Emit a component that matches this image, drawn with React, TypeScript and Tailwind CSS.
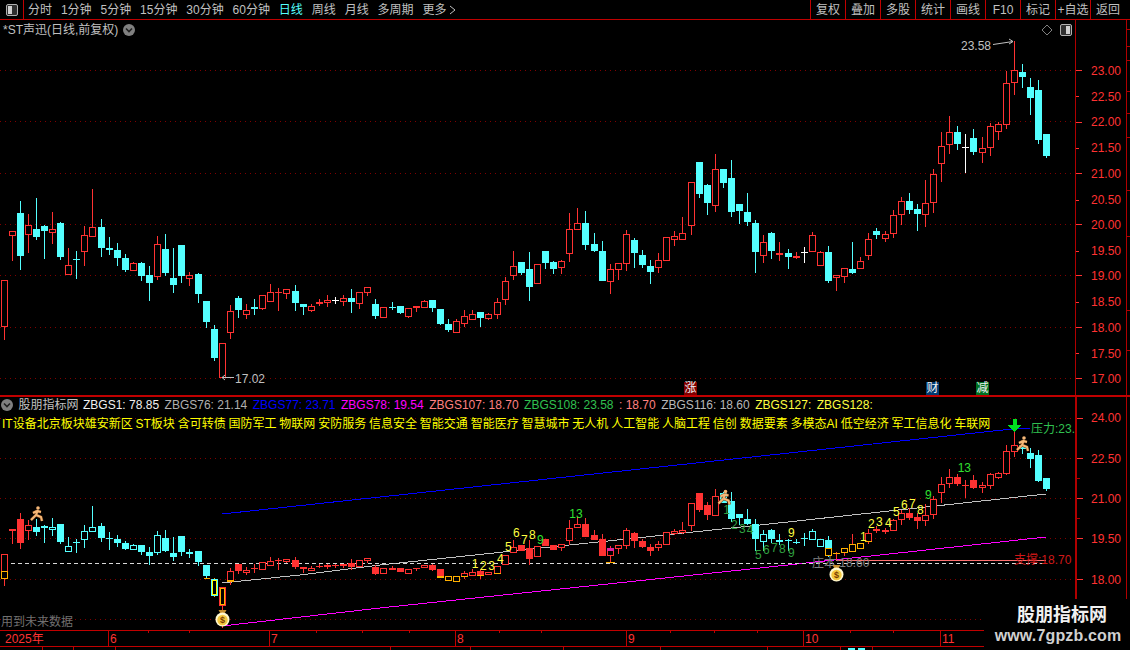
import React from "react";

type C = [number, number, number, number, number, string];
const R = "#ff3232", CY = "#54ffff", OR = "#ffb000", AX = "#b00000", DOT = "#800000";

const up1: [number, number, C[]][] = [
  [0, 180, [
    [13,301,480,301,440,"u"],[37,154,243,154,167,"u"],[61,63,270,99,228,"d"],[85,102,219,135,164,"u"],[109,54,180,147,171,"d"],[133,135,237,138,153,"d"],[157,96,192,148,158,"u"],[181,126,240,129,231,"d"],[205,204,286,256,285,"u"],[229,213,297,238,240,"d"],[253,138,258,165,215,"u"],[277,27,171,141,170,"u"],[305,117,231,141,204,"d"],[328,171,225,204,210,"d"],[352,189,258,210,234,"d"],[376,222,276,234,270,"d"],[400,246,273,250,272,"u"],[424,246,303,249,288,"d"],[448,258,363,285,309,"d"],[472,168,300,193,290,"u"],[496,162,288,207,279,"d"],[520,204,339,294,315,"d"],[544,195,309,195,288,"d"],[568,276,318,286,296,"u"],[595,279,369,282,342,"d"],[619,363,444,363,426,"d"],[643,435,543,447,534,"d"],[667,490,594,490,594,"u"],[691,375,477,394,458,"u"],[715,348,414,354,390,"d"],[739,372,417,391,404,"u"],[763,357,405,381,387,"d"],[787,345,390,346,386,"u"],[811,312,366,337,365,"u"],[835,324,393,336,340,"r"],[859,328,357,328,341,"u"],[886,315,393,333,369,"d"],[910,372,405,372,381,"d"],[934,372,396,379,392,"u"],[958,357,378,366,372,"r"],[982,345,381,361,369,"u"],[1006,351,372,361,363,"w"],[1030,345,378,355,365,"u"],[1054,327,399,354,366,"d"],[1078,336,387,337,371,"u"],[1102,322,348,322,338,"u"],[1126,357,417,372,408,"d"],
  ]],
  [380, 150, [
    [10,472,503,472,503,"u"],[37,457,480,471,474,"d"],[61,468,492,468,489,"d"],[85,474,504,475,500,"u"],[109,468,486,468,473,"r"],[133,450,474,454,473,"u"],[157,450,486,450,474,"d"],[181,477,525,477,522,"d"],[205,507,546,522,540,"d"],[229,507,549,514,548,"u"],[253,480,531,499,521,"u"],[277,480,510,493,509,"u"],[301,486,531,486,504,"d"],[325,489,510,493,506,"u"],[352,444,507,457,494,"u"],[376,381,465,394,449,"u"],[400,303,390,349,377,"u"],[424,336,375,336,369,"d"],[448,306,453,357,411,"d"],[472,342,402,343,401,"u"],[496,303,357,303,339,"d"],[520,333,372,336,357,"d"],[544,330,372,334,353,"u"],[568,189,336,238,311,"u"],[592,174,240,220,239,"u"],[616,183,300,219,285,"d"],[643,249,306,282,303,"d"],[667,273,393,303,393,"d"],[691,342,432,358,395,"u"],[715,340,390,340,359,"u"],[739,240,363,253,341,"u"],[763,264,354,270,309,"d"],[787,300,354,315,345,"d"],[811,330,402,348,366,"d"],[835,309,369,331,353,"u"],[859,262,332,262,332,"u"],[883,243,288,259,269,"u"],[907,201,270,250,269,"u"],[934,97,255,97,227,"u"],[958,36,144,36,132,"d"],[982,102,195,105,159,"d"],[1006,12,186,58,167,"u"],[1030,57,114,57,99,"d"],[1054,30,201,84,186,"d"],[1078,162,222,162,183,"d"],[1102,129,228,186,216,"d"],[1126,210,369,219,306,"d"],
  ]],
  [750, 30, [
    [40,615,699,636,677,"u"],[64,606,687,609,663,"d"],[88,636,693,669,675,"r"],[115,657,717,669,681,"d"],[139,666,687,678,684,"r"],[163,651,699,665,667,"w"],[187,606,666,616,665,"u"],[211,664,708,667,707,"u"],[235,648,759,666,753,"d"],[259,736,783,736,743,"u"],[283,714,759,715,740,"u"],[307,636,732,717,729,"d"],[331,681,717,694,716,"u"],[355,609,690,628,677,"u"],[379,594,627,603,615,"d"],[406,603,636,613,626,"u"],[430,540,624,556,611,"u"],[454,501,585,514,554,"u"],[478,489,552,513,540,"d"],[502,522,603,537,552,"d"],[526,450,591,520,554,"u"],[550,417,549,433,520,"u"],[574,306,456,349,401,"u"],[598,258,372,307,344,"u"],[622,288,360,307,342,"d"],[646,312,429,352,354,"w"],[670,297,375,324,366,"d"],[697,321,399,355,368,"u"],[721,279,378,289,355,"u"],[745,276,330,283,307,"u"],[769,123,297,160,284,"u"],[793,33,195,121,160,"u"],[817,102,174,126,141,"d"],[841,144,255,171,204,"d"],[865,150,342,180,330,"d"],[889,312,384,312,378,"d"],
  ]],
];

const low1: [number, number, C[]][] = [
  [0, 490, [
    [13,193,288,193,267,"u"],[37,118,162,118,124,"u"],[61,70,177,87,159,"r"],[85,90,150,106,122,"u"],[109,87,138,111,126,"d"],[133,105,159,108,114,"d"],[157,84,138,111,119,"h"],[181,102,162,102,156,"d"],[205,141,186,169,185,"h"],[229,147,189,156,159,"d"],[253,105,174,124,150,"h"],[277,48,126,112,125,"h"],[305,99,156,108,144,"d"],[328,126,180,144,147,"d"],[352,135,171,147,159,"d"],[376,153,180,159,177,"d"],[400,162,180,166,179,"h"],[424,165,195,165,186,"d"],[448,171,225,186,198,"d"],[472,123,195,136,188,"h"],[496,120,186,144,183,"d"],[520,141,213,189,201,"d"],[544,138,198,138,186,"d"],[568,177,204,186,192,"d"],[595,183,228,183,216,"d"],[619,225,267,225,259,"d"],[643,265,320,267,317,"cy"],[667,291,414,291,348,"ry"],[691,235,285,244,275,"u"],[715,222,252,222,243,"r"],[739,231,255,240,248,"u"],[763,222,249,235,237,"r"],[787,216,240,217,239,"u"],[811,201,228,214,227,"u"],[835,204,240,210,214,"r"],[859,207,220,208,216,"u"],[886,201,237,210,231,"r"],[910,231,249,231,236,"r"],[934,228,243,235,242,"u"],[958,222,235,228,230,"r"],[982,222,237,225,232,"r"],[1006,222,234,226,228,"r"],[1030,221,234,221,227,"u"],[1054,207,240,220,232,"r"],[1078,210,232,211,230,"u"],[1102,204,220,205,214,"u"],[1126,225,255,232,251,"r"],
  ]],
  [380, 480, [
    [10,264,282,265,281,"u"],[37,258,270,264,269,"r"],[61,264,276,264,276,"r"],[85,268,282,268,281,"u"],[109,264,273,264,266,"r"],[133,256,265,256,265,"u"],[157,252,272,255,270,"r"],[181,267,294,267,294,"r"],[205,288,303,288,303,"o"],[229,288,306,288,306,"o"],[253,273,297,280,292,"u"],[277,268,288,276,287,"u"],[301,268,297,274,286,"r"],[325,276,286,276,286,"u"],[352,258,283,258,282,"u"],[376,226,255,226,255,"u"],[400,180,220,202,218,"u"],[424,195,214,195,214,"r"],[448,180,255,205,237,"r"],[472,199,230,199,230,"u"],[496,177,198,177,198,"r"],[520,195,210,195,210,"r"],[544,192,213,193,204,"u"],[568,120,195,144,183,"u"],[592,111,144,133,143,"u"],[616,114,171,132,171,"r"],[643,150,180,165,180,"r"],[667,162,228,177,228,"r"],[691,198,250,205,227,"u"],[715,195,222,195,206,"u"],[739,144,207,150,198,"u"],[763,156,204,159,183,"r"],[787,177,204,183,201,"r"],[811,192,228,201,213,"r"],[835,183,213,192,204,"u"],[859,156,195,157,194,"u"],[883,147,165,153,162,"u"],[907,126,162,150,160,"u"],[934,69,153,69,137,"u"],[958,40,96,40,90,"r"],[982,66,120,75,105,"r"],[1006,27,108,48,107,"u"],[1030,36,70,40,70,"d"],[1054,36,126,63,117,"d"],[1078,101,135,101,113,"d"],[1102,87,135,117,132,"d"],
  ]],
  [750, 440, [
    [16,238,333,252,297,"d"],[40,270,333,283,305,"h"],[64,267,309,271,297,"d"],[88,282,315,300,305,"d"],[115,297,333,300,303,"d"],[139,297,312,305,309,"d"],[163,280,318,295,297,"d"],[187,267,300,273,299,"h"],[211,297,321,297,320,"h"],[235,288,350,300,324,"d"],[259,336,362,338,342,"of"],[283,325,348,325,338,"o"],[307,282,336,312,336,"o"],[331,309,327,309,327,"o"],[355,268,312,280,307,"u"],[379,258,279,267,273,"r"],[406,265,282,270,276,"u"],[430,236,273,241,272,"u"],[454,210,255,220,241,"u"],[478,205,240,219,233,"r"],[502,220,267,231,242,"r"],[526,192,258,224,242,"u"],[550,168,237,178,224,"u"],[574,111,188,133,160,"u"],[598,87,144,111,131,"u"],[622,102,138,111,132,"r"],[646,120,174,135,138,"r"],[670,105,147,120,144,"r"],[697,126,159,136,145,"u"],[721,100,147,102,138,"u"],[745,96,117,99,113,"u"],[769,15,105,33,102,"u"],[793,-30,50,15,35,"u"],[817,5,42,15,28,"d"],[841,24,84,39,57,"d"],[865,30,126,45,123,"d"],[889,114,153,114,147,"d"],
  ]],
];

function Candle({ ox, oy, c }: { ox: number; oy: number; c: C }) {
  const [cx, wt, wb, bt, bb, t] = c;
  const col = Math.floor(ox + cx / 3);
  const l = col - 3;
  const yt = Math.round(oy + wt / 3), yb = Math.round(oy + wb / 3);
  const t2 = Math.round(oy + bt / 3), b2 = Math.max(Math.round(oy + bb / 3), t2 + 1);
  const color = t === "u" || t === "r" || t === "ry" ? R : t === "w" ? "#ffffff" : t === "o" || t === "of" ? OR : CY;
  const wc = t === "o" || t === "of" || t === "ry" ? R : color;
  const solid = t === "d" || t === "r" || t === "w" || t === "of" || b2 - t2 < 3;
  return (
    <g>
      <line x1={col + 0.5} x2={col + 0.5} y1={yt} y2={yb} stroke={t === "cy" ? OR : wc} />
      {solid ? (
        <rect x={l} y={t2} width={7} height={b2 - t2} fill={color} />
      ) : (
        <rect x={l + 0.5} y={t2 + 0.5} width={6} height={b2 - t2 - 1} fill="#000" stroke={color} />
      )}
      {(t === "cy" || t === "ry") && (
        <rect x={l + 1.5} y={t2 + 1.5} width={4} height={b2 - t2 - 3} fill="#000" stroke={t === "cy" ? "#ffff00" : OR} />
      )}
    </g>
  );
}

function Runner({ x, y }: { x: number; y: number }) {
  const d = "M1 -4 L-1 1 M-1 1 L-6 6 M-1 1 L4 3 L5 7 M0 -3 L-4 -1 M0 -3 L4 -2";
  return (
    <g transform={`translate(${x} ${y})`} shapeRendering="auto">
      <path d={d} stroke="#6b3a10" strokeWidth={3} fill="none" />
      <path d={d} stroke="#f6b878" strokeWidth={2} fill="none" />
      <circle cx={1} cy={-6} r={1.8} fill="#f6b878" />
    </g>
  );
}

function Bag({ x, y }: { x: number; y: number }) {
  return (
    <g transform={`translate(${x} ${y})`} shapeRendering="auto">
      <path d="M-4 -9 L4 -9 L2 -5.5 L-2 -5.5 Z" fill="#c89030" />
      <ellipse cx={0} cy={0.5} rx={7} ry={7} fill="#fff8d0" />
      <ellipse cx={0} cy={1} rx={5.2} ry={5.2} fill="#f4c840" />
      <text x={0} y={4} textAnchor="middle" fontSize={9} fontWeight={700} fill="#7a3c00">$</text>
    </g>
  );
}

const Dots = ({ ys }: { ys: number[] }) => (
  <>
    {ys.map((y) => (
      <line key={y} x1={0} x2={1075} y1={y + 0.5} y2={y + 0.5} stroke={DOT} strokeDasharray="1 4" />
    ))}
  </>
);

const T = ({ x, y, c, s, a, fs = 12 }: { x: number; y: number; c: string; s: string; a?: "middle" | "end" | "start"; fs?: number }) => (
  <text x={x} y={y + fs * 0.36} fill={c} fontSize={fs} textAnchor={a ?? "start"} shapeRendering="auto">{s}</text>
);

const Badge = ({ cls, s }: { cls: string; s: string }) => (
  <div className={`absolute top-[362px] h-[13px] w-[13px] flex items-center justify-center text-[12px] leading-[13px] text-[#f0f0f0] ${cls}`}>{s}</div>
);

const TABS = ["分时", "1分钟", "5分钟", "15分钟", "30分钟", "60分钟", "日线", "周线", "月线", "多周期"];
const BTNS = ["复权", "叠加", "多股", "统计", "画线", "F10", "标记", "+自选"];
const TAGS = "IT设备北京板块雄安新区 ST板块 含可转债 国防军工 物联网 安防服务 信息安全 智能交通 智能医疗 智慧城市 无人机 人工智能 人脑工程 信创 数据要素 多模态AI 低空经济 军工信息化 车联网";

const upAxis: [number, string][] = [[70.3,"23.00"],[96.3,"22.50"],[121.5,"22.00"],[147.5,"21.50"],[173.3,"21.00"],[199.5,"20.50"],[224.3,"20.00"],[250.5,"19.50"],[275.3,"19.00"],[301.5,"18.50"],[327.3,"18.00"],[353,"17.50"],[378.3,"17.00"]];
const loAxis: [number, string][] = [[418,"24.00"],[458.3,"22.50"],[498.3,"21.00"],[538.3,"19.50"],[579.3,"18.00"]];
const rightTicks = [29, 46, 60, 91, 113, 137, 190, 236, 310, 350];

const Y1 = "#ffff40", G1 = "#30e030", G2 = "#30a040";
const nums: [number, number, string, string][] = [
  [380+285/3,480+252/3,"1",Y1],[380+310/3,480+257/3,"2",Y1],[380+335/3,480+257/3,"3",Y1],[380+361/3,480+235/3,"4",Y1],[380+385/3,480+200/3,"5",Y1],[380+409/3,480+158/3,"6",Y1],[380+433/3,480+178/3,"7",Y1],[380+457/3,480+163/3,"8",Y1],
  [380+481/3,480+178/3,"9",G1],
  [380+588/3,480+100/3,"13",G1],
  [380+1040/3,480+90/3,"1",G2],[380+1063/3,480+135/3,"2",G2],[380+1087/3,480+145/3,"3",G2],[380+1110/3,480+148/3,"4",G2],
  [750+25/3,440+343/3,"5",G2],[750+49/3,440+328/3,"6",G2],[750+73/3,440+323/3,"7",G2],[750+97/3,440+327/3,"8",G2],[750+124/3,440+337/3,"9",G2],
  [750+124/3,440+278/3,"9",Y1],[750+340/3,440+290/3,"1",Y1],[750+364/3,440+250/3,"2",Y1],[750+388/3,440+245/3,"3",Y1],[750+415/3,440+248/3,"4",Y1],[750+439/3,440+215/3,"5",Y1],[750+463/3,440+193/3,"6",Y1],[750+487/3,440+190/3,"7",Y1],[750+511/3,440+208/3,"8",Y1],
  [750+535/3,440+165/3,"9",G1],[750+643/3,440+83/3,"13",G1],
];

function Square({ side }: { side: "left" | "right" }) {
  return (
    <div className="w-[12px] h-[12px] rounded-[2px] border border-[#b0b0b0] bg-[#303030] flex p-px">
      <div className={side === "left" ? "w-1/2 bg-[#d0d0d0] mr-auto" : "w-1/2 bg-[#d0d0d0] ml-auto"} />
    </div>
  );
}

function Chevron() {
  return (
    <div className="w-[12px] h-[12px] rounded-full bg-[#808080] flex items-center justify-center shrink-0">
      <svg width="8" height="6" viewBox="0 0 8 6"><path d="M1 1.5 L4 4.5 L7 1.5" stroke="#202020" strokeWidth="1.6" fill="none" /></svg>
    </div>
  );
}

export default function App() {
  return (
    <div className="relative w-[1130px] h-[650px] bg-black overflow-hidden flex flex-col text-[12px] leading-none text-[#c0c0c0] [font-family:'Liberation_Sans','Noto_Sans_CJK_SC',sans-serif]">
      {/* toolbar */}
      <div className="h-[20px] shrink-0 flex items-stretch border-b border-[#c00000]">
        <div className="w-[24px] shrink-0 border-r border-[#c00000] flex items-center justify-center"><Square side="left" /></div>
        <div className="flex items-center pl-[4px] gap-[8.9px]">
          {TABS.map((t) => (
            <span key={t} className={t === "日线" ? "text-[#54ffff]" : ""}>{t}</span>
          ))}
          <span className="flex items-center gap-[3px]">更多
            <svg width="7" height="10" viewBox="0 0 7 10"><path d="M1 1 L6 5 L1 9" stroke="#c0c0c0" fill="none" /></svg>
          </span>
        </div>
        <div className="ml-auto flex items-stretch pr-[10px]">
          {BTNS.map((b) => (
            <div key={b} className="w-[35px] flex items-center justify-center border-l border-[#c00000]">{b}</div>
          ))}
          <div className="w-[30px] pl-[5px] flex items-center border-l border-[#c00000]">返回</div>
        </div>
      </div>

      {/* upper pane */}
      <div className="relative h-[377px] shrink-0 border-b-2 border-[#c00000]">
        <svg className="absolute inset-0" width={1130} height={375} viewBox="0 20 1130 375" shapeRendering="crispEdges" fontFamily="inherit">
          <Dots ys={[70, 121, 173, 224, 275, 327, 378]} />
          {up1.map(([ox, oy, list]) => list.map((c, i) => <Candle key={`${ox}-${i}`} ox={ox} oy={oy} c={c} />))}
          <line x1={1075.5} x2={1075.5} y1={20} y2={395} stroke={AX} />
          <line x1={1126.5} x2={1126.5} y1={20} y2={395} stroke={AX} />
          {rightTicks.map((y) => <line key={y} x1={1127} x2={1130} y1={y + 0.5} y2={y + 0.5} stroke={AX} />)}
          {upAxis.map(([y, s], i) => (
            <g key={s}>
              <line x1={1076} x2={i % 2 ? 1079 : 1082} y1={Math.round(y) + 0.5} y2={Math.round(y) + 0.5} stroke={R} />
              <T x={1091} y={y + 0.5} c={R} s={s} />
            </g>
          ))}
          <T x={961} y={45.5} c="#c0c0c0" s="23.58" />
          <path d="M993 44.5 L1013 41.5 M1009 39 L1013 41.5 L1009 44" stroke="#c0c0c0" fill="none" shapeRendering="auto" />
          <T x={235} y={379} c="#c0c0c0" s="17.02" />
          <path d="M234 377.5 L222 377.5 M225 375 L222 377.5 L225 380" stroke="#c0c0c0" fill="none" shapeRendering="auto" />
          <path d="M1047 25 L1052 30 L1047 35 L1042 30 Z" stroke="#808080" fill="none" shapeRendering="auto" />
        </svg>
        <Badge cls="left-[684px] bg-[#800000]" s="涨" />
        <Badge cls="left-[926px] bg-[#003a70]" s="财" />
        <Badge cls="left-[976px] bg-[#007020]" s="减" />
        <div className="relative flex items-center h-[19px] pl-[3px] gap-[5px]">
          <span>*ST声迅(日线,前复权)</span>
          <Chevron />
        </div>
        <div className="absolute top-[4px] left-[1060px]"><Square side="right" /></div>
      </div>

      {/* lower pane */}
      <div className="relative h-[233px] shrink-0">
        <svg className="absolute inset-0" width={1130} height={233} viewBox="0 397 1130 233" shapeRendering="crispEdges" fontFamily="inherit">
          <Dots ys={[418, 458, 498, 538, 579, 619]} />
          <line x1={222} y1={514} x2={1012} y2={429} stroke="#0000ff" />
          <line x1={1012} y1={429} x2={1030} y2={428} stroke="#0000ff" />
          <polyline points="222,583 300,575 380,565 560,546 760,525 1046,494" fill="none" stroke="#c0c0c0" />
          <polyline points="222,626 380,608 760,568 1046,537" fill="none" stroke="#ff00ff" />
          <line x1={4} x2={1047} y1={563.5} y2={563.5} stroke="#d8d8d8" strokeDasharray="4 3" />
          {low1.map(([ox, oy, list]) => list.map((c, i) => <Candle key={`${ox}-${i}`} ox={ox} oy={oy} c={c} />))}
          <rect x={1.5} y={571.5} width={6} height={7} fill="#000" stroke={OR} />
          <rect x={204} y={578} width={6} height={1} fill={OR} />
          <rect x={227} y={580} width={7} height={2} fill={OR} />
          <rect x={437} y={576} width={7} height={2} fill={OR} />
          <rect x={461} y={576} width={7} height={1} fill={OR} />
          <rect x={477} y={575} width={7} height={1} fill={OR} />
          <rect x={494} y={573} width={7} height={1} fill={OR} />
          <rect x={607} y={548} width={7} height={3} fill="#e020a0" />
          <rect x={606} y={562} width={9} height={1} fill={OR} />
          <rect x={865} y={541} width={7} height={1} fill={OR} />
          <rect x={825.5} y={548.5} width={6} height={7} fill="#000" stroke={OR} />
          <line x1={836} x2={1046} y1={560.5} y2={560.5} stroke="#ff7070" />
          {nums.map(([x, y, s, c], i) => <T key={i} x={x} y={y} c={c} s={s} a="middle" />)}
          <T x={812} y={563} c="#808080" s="庄本:18.60" />
          <T x={1014} y={560} c="#d01818" s="支撑:18.70" />
          <T x={1031} y={429} c="#30c050" s="压力:23." />
          <path d="M1012.5 419 H1016.5 V425 H1021 L1014.5 432 L1008 425 H1012.5 Z" fill="#00e020" />
          <Runner x={37} y={514} />
          <Runner x={724.5} y={497.5} />
          <Runner x={1023} y={444} />
          <Bag x={222.5} y={619} />
          <Bag x={836.5} y={574} />
          <rect x={1075} y={397} width={2} height={233} fill={AX} />
          <line x1={1126.5} x2={1126.5} y1={397} y2={630} stroke={AX} />
          {loAxis.map(([y, s]) => (
            <g key={s}>
              <line x1={1077} x2={1083} y1={Math.round(y) + 0.5} y2={Math.round(y) + 0.5} stroke={R} />
              <T x={1091} y={y} c={R} s={s} />
            </g>
          ))}
          <line x1={1077} x2={1080} y1={478.5} y2={478.5} stroke={AX} />
          <line x1={1077} x2={1080} y1={518.5} y2={518.5} stroke={AX} />
          <T x={1} y={622} c="#707070" s="用到未来数据" />
        </svg>
        <div className="relative flex items-center h-[15px] pl-[1px] gap-[5.5px]">
          <Chevron />
          <span className="mr-[-1px]">股朋指标网</span>
          <span className="text-[#f0f0f0]">ZBGS1: 78.85</span>
          <span className="text-[#b0b0b0]">ZBGS76: 21.14</span>
          <span className="text-[#0000ff]">ZBGS77: 23.71</span>
          <span className="text-[#ff00ff]">ZBGS78: 19.54</span>
          <span className="text-[#ff8080]">ZBGS107: 18.70</span>
          <span className="text-[#30c050]">ZBGS108: 23.58</span>
          <span className="text-[#ff8080]">: 18.70</span>
          <span className="text-[#b8b8b8]">ZBGS116: 18.60</span>
          <span className="text-[#ffff40]">ZBGS127:</span>
          <span className="text-[#ffff40]">ZBGS128:</span>
        </div>
        <div className="relative mt-[6px] pl-[2px] text-[#ffff00] whitespace-pre [word-spacing:-0.5px]">{TAGS}</div>
      </div>

      {/* date axis */}
      <svg className="shrink-0" width={1130} height={20} viewBox="0 630 1130 20" shapeRendering="crispEdges" fontFamily="inherit">
        <line x1={0} x2={1130} y1={630.5} y2={630.5} stroke="#c00000" />
        <line x1={0} x2={1130} y1={646.5} y2={646.5} stroke="#c00000" />
        {[108.5, 269.5, 455.5, 626.5, 803.5, 940.5].map((x) => <line key={x} x1={x} x2={x} y1={630} y2={646} stroke="#c00000" />)}
        {[148.5, 189.5, 316.5, 362.5, 409.5, 499.5, 541.5, 670.5, 714.5, 757.5, 850.5, 893.5].map((x) => <line key={x} x1={x} x2={x} y1={630} y2={633} stroke="#c00000" />)}
        {[42.5, 73.5, 115.5, 390.5, 470.5, 563.5, 660.5, 767.5, 840.5, 872.5].map((x) => <line key={x} x1={x} x2={x} y1={647} y2={650} stroke="#c00000" />)}
        <T x={5} y={638.5} c={R} s="2025年" />
        <T x={110} y={638.5} c={R} s="6" />
        <T x={271} y={638.5} c={R} s="7" />
        <T x={457} y={638.5} c={R} s="8" />
        <T x={628} y={638.5} c={R} s="9" />
        <T x={805} y={638.5} c={R} s="10" />
        <T x={942} y={638.5} c={R} s="11" />
        <rect x={848} y={648} width={7} height={2} fill="#54ffff" />
        <rect x={858} y={648} width={7} height={2} fill="#54ffff" />
      </svg>

      {/* watermark */}
      <div className="absolute right-0 bottom-0 w-[146px] h-[51px] bg-black flex flex-col items-center justify-center gap-[4px]">
        <div className="ml-[10px] text-[18px] font-bold text-[#f0f0f0]">股朋指标网</div>
        <div className="ml-[2px] text-[16px] font-bold text-[#d0d0d0] tracking-[0.15px]">www.7gpzb.com</div>
      </div>
    </div>
  );
}
